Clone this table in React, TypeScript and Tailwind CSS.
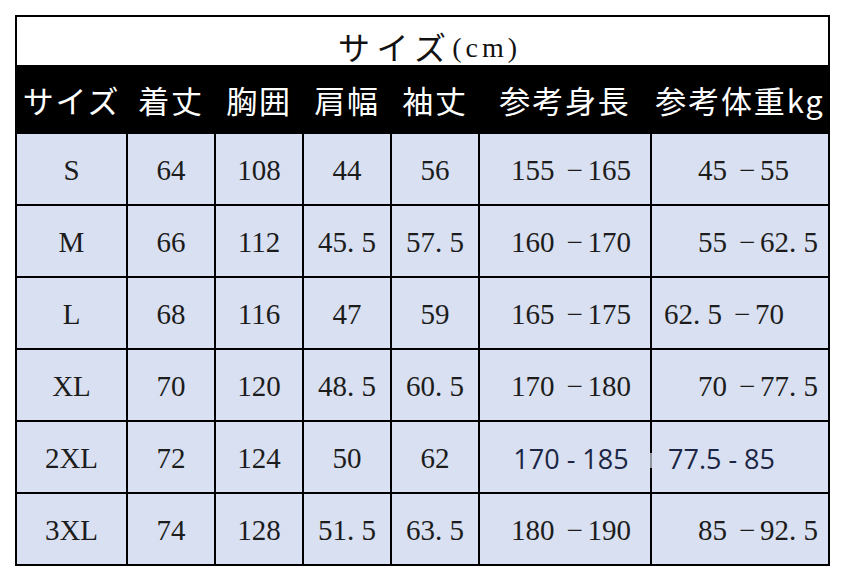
const headers = ['サイズ', '着丈', '胸囲', '肩幅', '袖丈', '参考身長', '参考体重kg']

type Row = {
  size: string
  cells: string[]
  height: [string, string]
  weight: [string, string]
  weightPad: string
  sans?: boolean
}

const rows: Row[] = [
  { size: 'S', cells: ['64', '108', '44', '56'], height: ['155', '165'], weight: ['45', '55'], weightPad: 'pl-[46px]' },
  { size: 'M', cells: ['66', '112', '45. 5', '57. 5'], height: ['160', '170'], weight: ['55', '62. 5'], weightPad: 'pl-[46px]' },
  { size: 'L', cells: ['68', '116', '47', '59'], height: ['165', '175'], weight: ['62. 5', '70'], weightPad: 'pl-[12px]' },
  { size: 'XL', cells: ['70', '120', '48. 5', '60. 5'], height: ['170', '180'], weight: ['70', '77. 5'], weightPad: 'pl-[46px]' },
  { size: '2XL', cells: ['72', '124', '50', '62'], height: ['170', '185'], weight: ['77.5', '85'], weightPad: 'pl-[16px]', sans: true },
  { size: '3XL', cells: ['74', '128', '51. 5', '63. 5'], height: ['180', '190'], weight: ['85', '92. 5'], weightPad: 'pl-[46px]' },
]

const serif = "font-['Liberation_Serif','Noto_Sans_CJK_JP',serif] text-[29px] text-[#1c1c1c]"
const sans = "font-['Open_Sans',sans-serif] text-[27px] text-[#1b2644]"

function Range({ from, to, sans: isSans }: { from: string; to: string; sans?: boolean }) {
  if (isSans) {
    return <span className="whitespace-pre">{`${from} - ${to}`}</span>
  }
  // mincho-style full width dash between the two numbers
  return (
    <span className="whitespace-pre">
      {from}
      <span className="inline-block w-[33px] pl-[12px]">−</span>
      {to}
    </span>
  )
}

export default function App() {
  return (
    <div className="min-h-[582px] w-[846px] bg-white pt-[15px] pl-[15px]">
      <div className="w-[815px] border-2 border-black">
        {/* title */}
        <div className="flex h-[48px] items-end justify-center pb-[3px] pl-[14px]">
          <span className="font-['Noto_Sans_CJK_JP',sans-serif] text-[32px] leading-none tracking-[0.2em] text-[#111]">
            サイズ
          </span>
          <span className="font-['Liberation_Serif',serif] text-[28px] leading-none tracking-[0.14em] text-[#111]">
            (cm)
          </span>
        </div>

        {/* header row */}
        <div className="grid h-[69px] grid-cols-[109px_86px_86px_86px_86px_170px_176px] gap-x-[2px] bg-black">
          {headers.map((h) => (
            <div
              key={h}
              className="flex items-center justify-center whitespace-nowrap pt-[2px] font-['Noto_Sans_CJK_JP',sans-serif] text-[31px] tracking-[0.06em] text-white"
            >
              {h}
            </div>
          ))}
        </div>

        {/* data */}
        <div className="grid grid-cols-[109px_86px_86px_86px_86px_170px_176px] gap-[2px] bg-black">
          {rows.map((r) => (
            <div key={r.size} className="contents">
              <div className={`flex h-[70px] items-center justify-center bg-[#d9e0f1] pt-[4px] ${serif}`}>{r.size}</div>
              {r.cells.map((c, i) => (
                <div key={i} className={`flex h-[70px] items-center justify-center whitespace-pre bg-[#d9e0f1] pt-[4px] ${serif}`}>
                  {c}
                </div>
              ))}
              <div className={`flex h-[70px] items-center justify-center bg-[#d9e0f1] pt-[4px] pl-[12px] ${r.sans ? sans : serif}`}>
                <Range from={r.height[0]} to={r.height[1]} sans={r.sans} />
              </div>
              <div className={`relative flex h-[70px] items-center bg-[#d9e0f1] pt-[4px] ${r.weightPad} ${r.sans ? sans : serif}`}>
                {r.sans && <span className="absolute left-[-2px] top-[31px] h-[15px] w-[2px] bg-[#8f949c]" />}
                <Range from={r.weight[0]} to={r.weight[1]} sans={r.sans} />
              </div>
            </div>
          ))}
        </div>
      </div>
    </div>
  )
}
